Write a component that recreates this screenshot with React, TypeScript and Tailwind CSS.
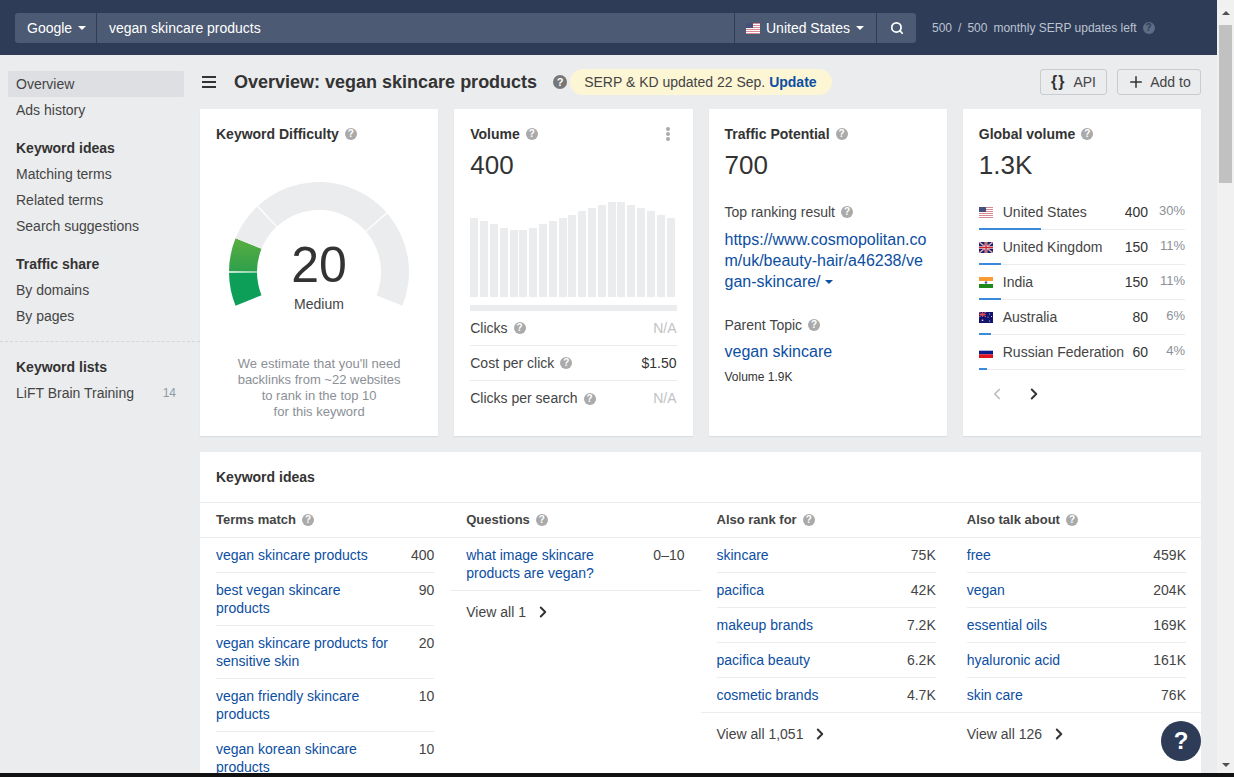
import React from "react";
import { ChevronLeft, ChevronRight, Plus, Search } from "lucide-react";

const FONT = "[font-family:'Liberation_Sans',Arial,sans-serif]";

function Help({ dark = false, big = false }: { dark?: boolean; big?: boolean }) {
  return (
    <span
      className={`inline-flex items-center justify-center rounded-full font-bold text-white align-middle ${
        big ? "h-[14px] w-[14px] text-[11px]" : "h-3 w-3 text-[10px]"
      } leading-none ${dark ? "bg-[#5f6c85] !text-[#2e3c58]" : big ? "bg-[#777]" : "bg-[#aaaaaa]"}`}
    >
      ?
    </span>
  );
}

function Caret({ color = "border-t-white" }: { color?: string }) {
  return <span className={`inline-block h-0 w-0 border-x-[4px] border-t-[4px] border-x-transparent ${color}`} />;
}

function Flag({ code }: { code: string }) {
  if (code === "us")
    return (
      <svg width="14" height="11" viewBox="0 0 14 11" className="shrink-0">
        <rect width="14" height="11" fill="#fff" />
        {[0, 2, 4, 6, 8, 10].map((y) => (
          <rect key={y} y={y} width="14" height="1" fill="#d88a94" />
        ))}
        <rect width="7" height="5" fill="#46507a" />
      </svg>
    );
  if (code === "gb")
    return (
      <svg width="14" height="11" viewBox="0 0 14 11" className="shrink-0">
        <rect width="14" height="11" fill="#14206b" />
        <path d="M0 0L14 11M14 0L0 11" stroke="#fff" strokeWidth="1.3" />
        <path d="M0 0L14 11M14 0L0 11" stroke="#d3202f" strokeWidth="0.6" />
        <path d="M7 0V11M0 5.5H14" stroke="#fff" strokeWidth="2.6" />
        <path d="M7 0V11M0 5.5H14" stroke="#d3202f" strokeWidth="1.4" />
      </svg>
    );
  if (code === "in")
    return (
      <svg width="14" height="11" viewBox="0 0 14 11" className="shrink-0">
        <rect width="14" height="4" fill="#fb9c33" />
        <rect y="4" width="14" height="3" fill="#fff" />
        <rect y="7" width="14" height="4" fill="#1e8a1c" />
        <circle cx="7" cy="5.5" r="1.3" fill="#4a5a9a" />
      </svg>
    );
  if (code === "au")
    return (
      <svg width="14" height="11" viewBox="0 0 14 11" className="shrink-0">
        <rect width="14" height="11" fill="#14146e" />
        <path d="M0 0L7 5M7 0L0 5" stroke="#e0808a" strokeWidth="0.8" />
        <path d="M3.5 0V5M0 2.5H7" stroke="#e8404a" strokeWidth="1.1" />
        <circle cx="3.5" cy="8.3" r="0.8" fill="#fff" />
        <circle cx="10.5" cy="2" r="0.5" fill="#fff" />
        <circle cx="12.5" cy="4.5" r="0.5" fill="#fff" />
        <circle cx="9" cy="5" r="0.5" fill="#fff" />
        <circle cx="10.5" cy="9" r="0.5" fill="#fff" />
      </svg>
    );
  return (
    <svg width="14" height="11" viewBox="0 0 14 11" className="shrink-0">
      <rect width="14" height="3.7" fill="#fff" />
      <rect y="3.7" width="14" height="3.6" fill="#0b1a8c" />
      <rect y="7.3" width="14" height="3.7" fill="#e0141c" />
    </svg>
  );
}

function seg(a0: number, a1: number): string {
  const cx = 90;
  const cy = 91;
  const R = 90;
  const r = 62;
  const p = (rad: number, a: number) => {
    const t = (a * Math.PI) / 180;
    return `${(cx - rad * Math.cos(t)).toFixed(2)} ${(cy - rad * Math.sin(t)).toFixed(2)}`;
  };
  return `M${p(R, a0)}A${R} ${R} 0 0 1 ${p(R, a1)}L${p(r, a1)}A${r} ${r} 0 0 0 ${p(r, a0)}Z`;
}

function Gauge() {
  return (
    <div className="relative ml-[13px] mt-[38px] h-[130px] w-[180px]">
      <svg width="180" height="130" viewBox="0 0 180 130">
        <defs>
          <linearGradient id="g" x1="0" y1="0" x2="0" y2="1">
            <stop offset="0" stopColor="#58ae41" />
            <stop offset="1" stopColor="#2f9f4c" />
          </linearGradient>
        </defs>
        <path d={seg(-22, -0.5)} fill="#0d9f57" />
        <path d={seg(0.5, 22)} fill="url(#g)" />
        <path d={seg(22, 46.5)} fill="#ebecee" />
        <path d={seg(47.5, 138.5)} fill="#ebecee" />
        <path d={seg(139.5, 202)} fill="#ebecee" />
      </svg>
      <div className="absolute left-0 right-0 top-[54px] text-center text-[50px] leading-[60px] text-[#333]">20</div>
      <div className="absolute left-0 right-0 top-[114px] text-center text-[14px] leading-[18px] text-[#444]">Medium</div>
    </div>
  );
}

const bars = [79, 76, 73, 69, 67, 67, 69, 73, 76, 79, 82, 86, 89, 92, 95, 95, 92, 89, 86, 82, 79];

const sideClass = "px-2 h-[26px] leading-[26px] text-[14px] text-[#444]";
const sideHead = "px-2 h-[26px] leading-[26px] text-[14px] font-bold text-[#333]";

function Sidebar() {
  return (
    <aside className="w-[192px] shrink-0 pl-2 pt-4">
      <div className={`${sideClass} w-[176px] rounded-[2px] bg-[#dedfe2]`}>Overview</div>
      <div className={sideClass}>Ads history</div>
      <div className={`${sideHead} mt-3`}>Keyword ideas</div>
      <div className={sideClass}>Matching terms</div>
      <div className={sideClass}>Related terms</div>
      <div className={sideClass}>Search suggestions</div>
      <div className={`${sideHead} mt-3`}>Traffic share</div>
      <div className={sideClass}>By domains</div>
      <div className={sideClass}>By pages</div>
      <div className="-ml-2 mt-3 w-[200px] border-t border-dashed border-[#d5d6d9]" />
      <div className={`${sideHead} mt-3`}>Keyword lists</div>
      <div className={`${sideClass} flex w-[176px] justify-between`}>
        <span>LiFT Brain Training</span>
        <span className="text-[12px] text-[#8d9aa5]">14</span>
      </div>
    </aside>
  );
}

function Card({ children, className = "" }: { children: React.ReactNode; className?: string }) {
  return <div className={`h-[327px] bg-white p-4 shadow-[0_1px_1px_#dcdde0] ${className}`}>{children}</div>;
}

function CardTitle({ children }: { children: React.ReactNode }) {
  return (
    <div className="flex h-[18px] items-center gap-[6px] text-[14px] font-bold leading-[18px] text-[#333]">
      {children}
      <Help />
    </div>
  );
}

function Value({ children }: { children: React.ReactNode }) {
  return <div className="mt-[7px] text-[26px] leading-[31px] text-[#333]">{children}</div>;
}

function StatRow({ label, value, last, na }: { label: string; value: string; last?: boolean; na?: boolean }) {
  return (
    <div className={`flex h-[35px] items-center justify-between text-[14px] text-[#444] ${last ? "" : "border-b border-[#ebecee]"}`}>
      <span className="flex items-center gap-[6px]">
        {label} <Help />
      </span>
      <span className={na ? "text-[#c0c2c6]" : "text-[#333]"}>{value}</span>
    </div>
  );
}

const countries = [
  { code: "us", name: "United States", num: "400", pct: "30%", w: "w-[62px]" },
  { code: "gb", name: "United Kingdom", num: "150", pct: "11%", w: "w-[22px]" },
  { code: "in", name: "India", num: "150", pct: "11%", w: "w-[22px]" },
  { code: "au", name: "Australia", num: "80", pct: "6%", w: "w-[12px]" },
  { code: "ru", name: "Russian Federation", num: "60", pct: "4%", w: "w-[8px]" },
];

function Row({ label, value, last }: { label: string; value: string; last?: boolean }) {
  return (
    <div className={`flex justify-between py-2 text-[14px] leading-[18px] ${last ? "" : "border-b border-[#ebecee]"}`}>
      <span className="w-[176px] text-[#0b4ea2]">{label}</span>
      <span className="text-[#444]">{value}</span>
    </div>
  );
}

function ViewAll({ label }: { label: string }) {
  return (
    <div className="flex h-[43px] items-center gap-2 border-t border-[#ebecee] px-4 text-[14px] text-[#444]">
      {label}
      <ChevronRight size={18} strokeWidth={2.6} className="text-[#333]" />
    </div>
  );
}

function ColHead({ title }: { title: string }) {
  return (
    <div className="flex h-[34px] items-center gap-[6px] px-4 pb-[1px] text-[13px] font-bold text-[#444]">
      {title} <Help />
    </div>
  );
}

export default function App() {
  return (
    <div className={`flex h-[777px] w-full flex-col overflow-hidden bg-black ${FONT}`}>
      <div className="flex h-[773px] min-h-0">
        <div className="min-w-0 flex-1 overflow-hidden bg-[#ebecee]">
          <header className="flex h-[55px] items-start bg-[#2e3c58] pl-[15px] pt-[13px]">
            <div className="flex h-[30px] w-[901px] gap-px text-[14px] text-white">
              <div className="flex w-[81px] items-center gap-[6px] rounded-l-[3px] bg-[#4c5a74] pl-3">
                Google <Caret />
              </div>
              <div className="flex flex-1 items-center bg-[#4c5a74] pl-3">vegan skincare products</div>
              <div className="flex w-[141px] items-center gap-[6px] bg-[#4c5a74] pl-[11px]">
                <Flag code="us" /> United States <Caret />
              </div>
              <div className="flex w-[39px] items-center justify-center rounded-r-[3px] bg-[#4c5a74]">
                <Search size={14} strokeWidth={3} />
              </div>
            </div>
            <div className="ml-4 flex h-[30px] items-center gap-[6px] text-[12px] text-[#bcc3cf]">
              <span>500</span>
              <span>/</span>
              <span>500</span>
              <span>monthly SERP updates left</span>
              <span className="flex">
                <Help dark />
              </span>
            </div>
          </header>

          <div className="flex">
            <Sidebar />
            <main className="relative ml-2 w-[1001px]">
              <div className="h-[54px] pt-[14px]">
                <div className="flex h-[26px] w-full items-center">
                  <svg width="14" height="12" viewBox="0 0 14 12" className="ml-[2px] shrink-0">
                    <path d="M0 1H14M0 6H14M0 11H14" stroke="#333" strokeWidth="2" />
                  </svg>
                  <h1 className="ml-[18px] text-[18px] font-bold text-[#333]">Overview: vegan skincare products</h1>
                  <span className="ml-4 mr-[3px] flex">
                    <Help big />
                  </span>
                  <div className="flex h-[26px] items-center rounded-[13px] bg-[#fdf6d5] pl-[14px] pr-[15px] text-[14px] text-[#444]">
                    SERP &amp; KD updated 22 Sep.&nbsp;
                    <span className="font-bold text-[#0b4ea2]">Update</span>
                  </div>
                  <div className="ml-auto flex h-[26px] w-[67px] items-center justify-center gap-2 rounded-[3px] border border-[#c9cbcf] text-[14px] text-[#444]">
                    <span className="text-[16px] font-bold tracking-[1px] text-[#333]">{"{}"}</span> API
                  </div>
                  <div className="ml-[10px] flex h-[26px] w-[84px] items-center justify-center gap-[5px] rounded-[3px] border border-[#c9cbcf] text-[14px] text-[#444]">
                    <Plus size={18} strokeWidth={2} className="text-[#333]" /> Add to
                  </div>
                </div>
              </div>

              <div className="grid grid-cols-4 gap-4">
                <Card>
                  <CardTitle>Keyword Difficulty</CardTitle>
                  <Gauge />
                  <p className="mt-[45px] text-center text-[13px] leading-4 text-[#8b8f96]">
                    We estimate that you'll need
                    <br />
                    backlinks from ~22 websites
                    <br />
                    to rank in the top 10
                    <br />
                    for this keyword
                  </p>
                </Card>

                <Card>
                  <div className="flex justify-between">
                    <CardTitle>Volume</CardTitle>
                    <div className="mr-[7px] flex flex-col justify-center gap-[1px]">
                      <span className="h-1 w-1 rounded-full bg-[#aaa]" />
                      <span className="h-1 w-1 rounded-full bg-[#aaa]" />
                      <span className="h-1 w-1 rounded-full bg-[#aaa]" />
                    </div>
                  </div>
                  <Value>400</Value>
                  <div className="mt-[21px] flex h-[95px] items-end justify-between pr-[2px]">
                    {bars.map((h, i) => (
                      <span key={i} className="w-2 bg-[#ebecee]" style={{ height: h }} />
                    ))}
                  </div>
                  <div className="mt-2 h-[6px] bg-[#ebecee]" />
                  <div>
                    <StatRow label="Clicks" value="N/A" na />
                    <StatRow label="Cost per click" value="$1.50" />
                    <StatRow label="Clicks per search" value="N/A" na last />
                  </div>
                </Card>

                <Card>
                  <CardTitle>Traffic Potential</CardTitle>
                  <Value>700</Value>
                  <div className="mt-[22px] flex items-center gap-[6px] text-[14px] leading-[18px] text-[#444]">
                    Top ranking result <Help />
                  </div>
                  <div className="mt-2 break-all text-[16px] leading-[21px] text-[#0b4ea2]">
                    https://www.cosmopolitan.com/uk/beauty-hair/a46238/vegan-skincare/{" "}
                    <span className="inline-block align-[3px] leading-none">
                      <Caret color="border-t-[#0b4ea2]" />
                    </span>
                  </div>
                  <div className="mt-[24px] flex items-center gap-[6px] text-[14px] leading-[18px] text-[#444]">
                    Parent Topic <Help />
                  </div>
                  <div className="mt-[7px] text-[16px] leading-[21px] text-[#0b4ea2]">vegan skincare</div>
                  <div className="mt-[6px] text-[12px] leading-[18px] text-[#333]">Volume 1.9K</div>
                </Card>

                <Card>
                  <CardTitle>Global volume</CardTitle>
                  <Value>1.3K</Value>
                  <div className="mt-[14px]">
                    {countries.map((c) => (
                      <div key={c.code} className="relative flex h-[35px] items-center border-b border-[#ebecee] text-[14px] text-[#444]">
                        <Flag code={c.code} />
                        <span className="ml-[10px] flex-1 whitespace-nowrap">{c.name}</span>
                        <span className="text-[#333]">{c.num}</span>
                        <span className="mb-[2px] w-[37px] text-right text-[13px] text-[#8b8f96]">{c.pct}</span>
                        <span className={`absolute -bottom-px left-0 h-[2px] bg-[#3b8ad9] ${c.w}`} />
                      </div>
                    ))}
                  </div>
                  <div className="mt-[15px] flex items-center gap-[19px] pl-[9px]">
                    <ChevronLeft size={18} strokeWidth={2.2} className="text-[#bbb]" />
                    <ChevronRight size={18} strokeWidth={2.6} className="text-[#333]" />
                  </div>
                </Card>
              </div>

              <section className="mt-4 h-[400px] bg-white">
                <div className="border-b border-[#ebecee] p-4 text-[14px] font-bold leading-[18px] text-[#333]">Keyword ideas</div>
                <div className="grid grid-cols-4 border-b border-[#ebecee]">
                  <ColHead title="Terms match" />
                  <ColHead title="Questions" />
                  <ColHead title="Also rank for" />
                  <ColHead title="Also talk about" />
                </div>
                <div className="grid grid-cols-4 items-start">
                  <div className="min-w-0 px-4">
                    <Row label="vegan skincare products" value="400" />
                    <Row label="best vegan skincare products" value="90" />
                    <Row label="vegan skincare products for sensitive skin" value="20" />
                    <Row label="vegan friendly skincare products" value="10" />
                    <Row label="vegan korean skincare products" value="10" />
                  </div>
                  <div className="min-w-0">
                    <div className="px-4">
                      <Row label="what image skincare products are vegan?" value="0–10" last />
                    </div>
                    <ViewAll label="View all 1" />
                  </div>
                  <div className="min-w-0">
                    <div className="pl-4 pr-[15px]">
                      <Row label="skincare" value="75K" />
                      <Row label="pacifica" value="42K" />
                      <Row label="makeup brands" value="7.2K" />
                      <Row label="pacifica beauty" value="6.2K" />
                      <Row label="cosmetic brands" value="4.7K" last />
                    </div>
                    <ViewAll label="View all 1,051" />
                  </div>
                  <div className="min-w-0">
                    <div className="pl-4 pr-[15px]">
                      <Row label="free" value="459K" />
                      <Row label="vegan" value="204K" />
                      <Row label="essential oils" value="169K" />
                      <Row label="hyaluronic acid" value="161K" />
                      <Row label="skin care" value="76K" last />
                    </div>
                    <ViewAll label="View all 126" />
                  </div>
                </div>
              </section>

              <div className="absolute left-[961px] top-[666px] flex h-10 w-10 items-center justify-center rounded-full bg-[#2e3c58] text-[24px] font-bold text-white">
                ?
              </div>
            </main>
          </div>
        </div>

        <div className="flex w-[17px] shrink-0 flex-col items-center bg-[#f1f1f1]">
          <div className="flex h-[25px] w-full items-center justify-center">
            <span className="h-0 w-0 border-x-[4px] border-b-[4px] border-x-transparent border-b-[#505050]" />
          </div>
          <div className="h-[158px] w-[13px] bg-[#c1c1c1]" />
          <div className="flex-1" />
          <div className="flex h-[17px] w-full items-center justify-center">
            <span className="h-0 w-0 border-x-[4px] border-t-[4px] border-x-transparent border-t-[#505050]" />
          </div>
        </div>
      </div>
      <div className="h-1 shrink-0 bg-[#111]" />
    </div>
  );
}
